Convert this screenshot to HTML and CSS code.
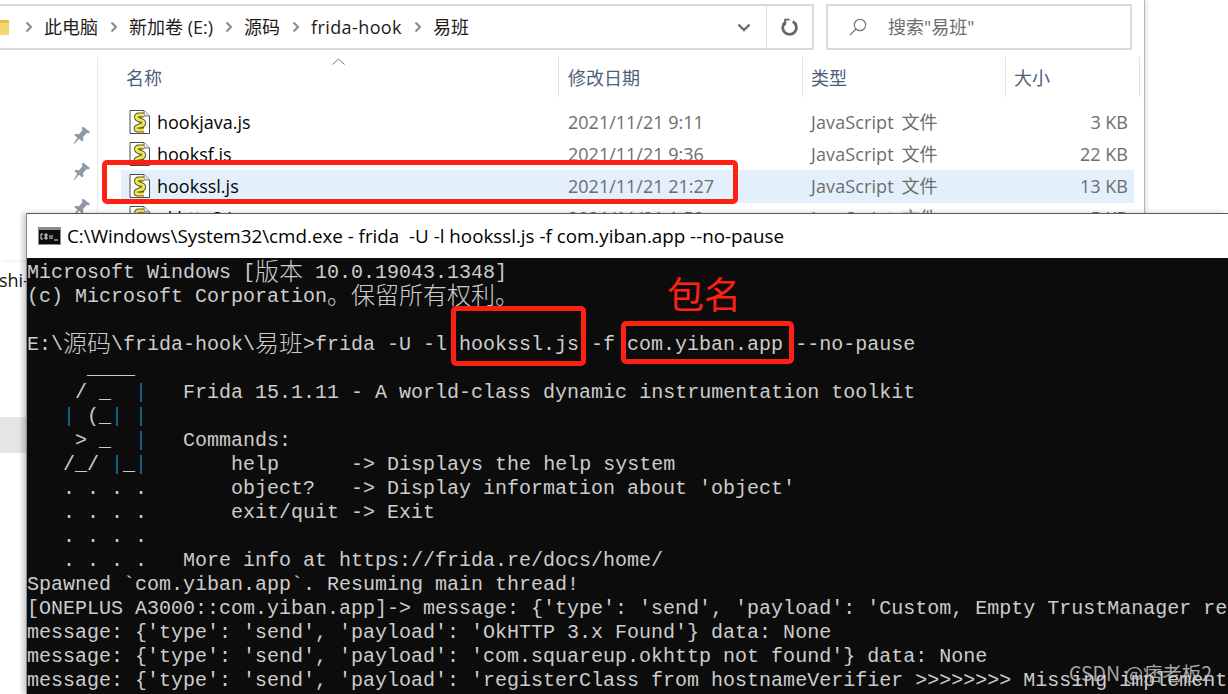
FILE: index.html
```
<!DOCTYPE html>
<html lang="zh-CN">
<head>
<meta charset="utf-8">
<title>frida hookssl</title>
<link rel="stylesheet" href="styles.css">
</head>
<body>
<svg class="defs" width="0" height="0" aria-hidden="true">
  <symbol id="js" viewBox="0 0 21 24">
    <path d="M1 .5h14l5.500 5.500v17.500H1z" fill="#fff" stroke="#4a4a4a"/>
    <path d="M15 .5V6h5.500" fill="#e8e8e8" stroke="#777"/>
    <path d="M15 5H9.500C7 5 7 9 9.500 9.500L13 11c2.500 1 2 4-.5 4.500L9 16.500c-2.500.8-2.500 3.500 0 3.500h6" fill="none" stroke="#5b5a2c" stroke-width="5"/>
    <path d="M15 5H9.500C7 5 7 9 9.500 9.500L13 11c2.500 1 2 4-.5 4.500L9 16.500c-2.500.8-2.500 3.500 0 3.500h6" fill="none" stroke="#efe657" stroke-width="3"/>
    <path d="M9 7h4M9 12h4M8 18h5" stroke="#6c6a2e" stroke-width="1"/>
  </symbol>
  <symbol id="chev" viewBox="0 0 7 12">
    <path d="M1.500 1.500 6 6l-4.500 4.500" fill="none" stroke="#8a8a8a" stroke-width="2"/>
  </symbol>
  <symbol id="pin" viewBox="0 0 18 20">
    <path d="M10 1.500 17 7l-1.500 1.500-1.800-.6-3.600 4 .4 3.200-1.500 1.300-3-2.700L1.500 19l-.7-.6 3.500-5.600-3-2.700L2.800 8.800l3.200.4 3.500-4.200-.8-1.800z" fill="#8f9aa6"/>
  </symbol>
</svg>
<div class="desktop">
  <section class="explorer">
    <div class="toolbar">
      <div class="address">
        <svg class="folder" viewBox="0 0 9 15"><rect width="9" height="15" fill="#f6d76f"/><rect width="9" height="3" fill="#e8bd4a"/></svg>
        <nav class="crumbs">
          <svg class="chev"><use href="#chev"/></svg>
          <span>此电脑</span>
          <svg class="chev"><use href="#chev"/></svg>
          <span>新加卷 (E:)</span>
          <svg class="chev"><use href="#chev"/></svg>
          <span>源码</span>
          <svg class="chev"><use href="#chev"/></svg>
          <span class="wide">frida-hook</span>
          <svg class="chev"><use href="#chev"/></svg>
          <span>易班</span>
        </nav>
        <div class="addr-down"><svg viewBox="0 0 14 9" width="14" height="9"><path d="M1.500 1.500 7 7l5.500-5.500" fill="none" stroke="#6d6d6d" stroke-width="2.400"/></svg></div>
        <div class="addr-refresh"><svg viewBox="0 0 18 18" width="18" height="18"><path d="M11.800 3.600A6.800 6.800 0 1 1 5 3.800" fill="none" stroke="#666" stroke-width="2.800"/><path d="M3.200 .8v6.400H5V2.600h3.600V.8z" fill="#666"/></svg></div>
      </div>
      <div class="search">
        <svg viewBox="0 0 18 18" width="18" height="18"><circle cx="11" cy="7" r="5.700" fill="none" stroke="#777" stroke-width="1.200"/><path d="M7 11 1 17" stroke="#777" stroke-width="1.300"/></svg>
        <span>搜索"易班"</span>
      </div>
    </div>
    <div class="body">
      <aside class="pins">
        <svg class="pin"><use href="#pin"/></svg>
        <svg class="pin"><use href="#pin"/></svg>
        <svg class="pin"><use href="#pin"/></svg>
      </aside>
      <div class="files">
        <div class="head">
          <div class="hcell hname">名称<svg class="sort" viewBox="0 0 13 7" width="13" height="7"><path d="M.5 6.500 6.500 1l6 5.500" fill="none" stroke="#777" stroke-width="1"/></svg></div>
          <div class="hcell hdate">修改日期</div>
          <div class="hcell htype">类型</div>
          <div class="hcell hsize">大小</div>
        </div>
        <div class="row">
          <div class="fname"><svg class="jsicon"><use href="#js"/></svg>hookjava.js</div>
          <div class="date">2021/11/21 9:11</div><div class="type">JavaScript 文件</div><div class="size">3 KB</div>
        </div>
        <div class="row">
          <div class="fname"><svg class="jsicon"><use href="#js"/></svg>hooksf.js</div>
          <div class="date">2021/11/21 9:36</div><div class="type">JavaScript 文件</div><div class="size">22 KB</div>
        </div>
        <div class="row selected">
          <div class="fname"><svg class="jsicon"><use href="#js"/></svg>hookssl.js</div>
          <div class="date">2021/11/21 21:27</div><div class="type">JavaScript 文件</div><div class="size">13 KB</div>
        </div>
        <div class="row">
          <div class="fname"><svg class="jsicon"><use href="#js"/></svg>okhttp3.js</div>
          <div class="date">2021/11/21 1:50</div><div class="type">JavaScript 文件</div><div class="size">5 KB</div>
        </div>
      </div>
    </div>
  </section>

  <div class="behind-text">shi-</div>
  <div class="behind-block"></div>

  <section class="cmd">
    <header class="cmd-title">
      <svg class="cmd-icon" viewBox="0 0 23 18"><rect width="23" height="18" fill="#8b8b8b"/><rect x="1" y="3" width="21" height="14" fill="#0c0c0c"/><path d="M5 7H3v5h2M7 7h2v2H7zM7 10h2v2H7zM12 8v4M14 8v4M16 13h4" fill="none" stroke="#e0e0e0" stroke-width="1"/></svg>
      <span>C:\Windows\System32\cmd.exe - frida  -U -l hookssl.js -f com.yiban.app --no-pause</span>
    </header>
<pre class="term">Microsoft Windows [<span class="cjk">版本</span> 10.0.19043.1348]
(c) Microsoft Corporation<span class="cjk">。保留所有权利。</span>

E:\<span class="cjk">源码</span>\frida-hook\<span class="cjk">易班</span>&gt;frida -U -l hookssl.js -f com.yiban.app --no-pause
     ____
    / _  <b>|</b>   Frida 15.1.11 - A world-class dynamic instrumentation toolkit
   <b>|</b> (_<b>|</b> <b>|</b>
    &gt; _  <b>|</b>   Commands:
   /_/ <b>|</b>_<b>|</b>       help      -&gt; Displays the help system
   . . . .       object?   -&gt; Display information about 'object'
   . . . .       exit/quit -&gt; Exit
   . . . .
   . . . .   More info at https://frida.re/docs/home/
Spawned `com.yiban.app`. Resuming main thread!
[ONEPLUS A3000::com.yiban.app]-&gt; message: {'type': 'send', 'payload': 'Custom, Empty TrustManager re
message: {'type': 'send', 'payload': 'OkHTTP 3.x Found'} data: None
message: {'type': 'send', 'payload': 'com.squareup.okhttp not found'} data: None
message: {'type': 'send', 'payload': 'registerClass from hostnameVerifier &gt;&gt;&gt;&gt;&gt;&gt;&gt;&gt; Missing implement
                                                '}}</pre>
  </section>

  <div class="mark mark-file"></div>
  <div class="mark mark-js"></div>
  <div class="mark mark-pkg"></div>
  <div class="pkg-label">包名</div>
  <div class="watermark">CSDN @痞老板2</div>
</div>
</body>
</html>
```
FILE: styles.css
```
* { box-sizing: border-box; }
html, body { margin: 0; padding: 0; background: #fff; }
.defs { position: absolute; }
.desktop {
  position: relative;
  width: 1228px;
  height: 694px;
  overflow: hidden;
  background: #fff;
  font-family: "Open Sans", "Noto Sans CJK SC", sans-serif;
  line-height: 24px;
}

/* Explorer window */
.explorer {
  position: absolute;
  left: 0;
  top: 0;
  width: 1144px;
  height: 260px;
  background: #fff;
  box-shadow: 1px 0 0 #b5b5b5, 3px 0 4px #e4e4e4;
  padding-top: 4px;
}
.toolbar { display: flex; gap: 12px; height: 46px; padding-right: 12px; }
.address {
  flex: 1;
  display: flex;
  align-items: center;
  border: solid #d9d9d9;
  border-width: 2px 2px 2px 0;
}
.folder { width: 9px; height: 15px; margin-right: 16px; }
.crumbs {
  flex: 1;
  display: flex;
  align-items: center;
  gap: 12px;
  font-size: 18px;
  color: #1c1c1c;
}
.wide { letter-spacing: .4px; }
.chev { width: 7px; height: 12px; }
.addr-down { width: 47px; display: flex; justify-content: center; padding-left: 3px; }
.addr-refresh {
  width: 46px;
  height: 100%;
  display: flex;
  align-items: center;
  justify-content: center;
  border-left: 1px solid #d9d9d9;
}
.search {
  width: 306px;
  display: flex;
  align-items: center;
  gap: 21px;
  padding-left: 21px;
  border: 2px solid #d9d9d9;
  font-size: 18px;
  color: #6d6d6d;
}
.body { display: flex; padding-top: 7px; }
.pins {
  width: 97px;
  display: flex;
  flex-direction: column;
  align-items: flex-end;
  gap: 16px;
  padding: 68px 6px 0 0;
}
.pin { width: 18px; height: 20px; flex: none; }
.files { flex: 1; border-left: 1px solid #eaeaea; min-height: 200px; }
.head { display: flex; height: 40px; font-size: 18px; color: #4c607a; }
.hcell { display: flex; align-items: center; border-right: 1px solid #e3e3e3; position: relative; padding-top: 2px; }
.hname { width: 461px; padding-left: 28px; }
.hdate { width: 244px; padding-left: 9px; }
.htype { width: 203px; padding-left: 8px; }
.hsize { width: 134px; padding-left: 8px; }
.sort { position: absolute; left: 234px; top: 1px; }
.row {
  display: grid;
  grid-template-columns: 437px 244px 203px 129px;
  align-items: center;
  height: 32px;
  margin-left: 23px;
  width: 1013px;
  font-size: 18px;
  color: #6d6d6d;
  white-space: nowrap;
}
.head + .row { margin-top: 9px; }
.selected { background: #e3f0fb; box-shadow: 0 1px 0 #e3f0fb; }
.fname { display: flex; align-items: center; gap: 7px; padding-left: 8px; color: #050505; }
.jsicon { width: 21px; height: 24px; flex: none; }
.date { padding-left: 10px; }
.type { padding-left: 9px; word-spacing: 3px; letter-spacing: .1px; }
.size { padding-right: 6px; text-align: right; }

/* things peeking out left of the console */
.behind-text { position: absolute; left: -1px; top: 268px; font-size: 18px; color: #111; }
.behind-block { position: absolute; left: 0; top: 417px; width: 27px; height: 36px; background: #e5e5e5; }

/* Console window */
.cmd {
  position: absolute;
  left: 27px;
  top: 213px;
  width: 1201px;
  height: 481px;
  display: flex;
  flex-direction: column;
  border-top: 1px solid #5a5a5a;
  box-shadow: -1px 0 0 #8c8c8c, -4px 0 5px rgba(0,0,0,.22);
  background: #0c0c0c;
}
.cmd-title {
  height: 44px;
  flex: none;
  display: flex;
  align-items: center;
  gap: 6px;
  padding-left: 11px;
  background: #fff;
  font-size: 18.800px;
  color: #000;
  white-space: pre;
}
.cmd-icon { width: 23px; height: 18px; flex: none; }
.term {
  margin: 0;
  padding-top: 3px;
  flex: 1;
  overflow: hidden;
  font-family: "Liberation Mono", "Noto Sans CJK SC", monospace;
  font-size: 20px;
  line-height: 24px;
  color: #cccccc;
  white-space: pre;
}
.term b { font-weight: normal; color: #1c6d96; }
.cjk { font-family: "Noto Sans CJK SC", sans-serif; font-size: 24px; font-weight: 300; line-height: 0; vertical-align: -2px; }

/* Annotations */
.mark { position: absolute; border: 5px solid #ff2014; border-radius: 5px; }
.mark-file { left: 102px; top: 160px; width: 636px; height: 44px; }
.mark-js { left: 451px; top: 306px; width: 135px; height: 60px; }
.mark-pkg { left: 621px; top: 321px; width: 173px; height: 43px; }
.pkg-label {
  position: absolute;
  left: 667px;
  top: 268px;
  font-family: "Noto Sans CJK SC", sans-serif;
  font-size: 37px;
  line-height: 50px;
  color: #ff2014;
}
.watermark {
  position: absolute;
  left: 1069px;
  top: 659px;
  font-family: "Noto Sans CJK SC", sans-serif;
  font-size: 19.500px;
  line-height: 28px;
  color: rgba(205,205,205,.82);
  white-space: nowrap;
}
```
